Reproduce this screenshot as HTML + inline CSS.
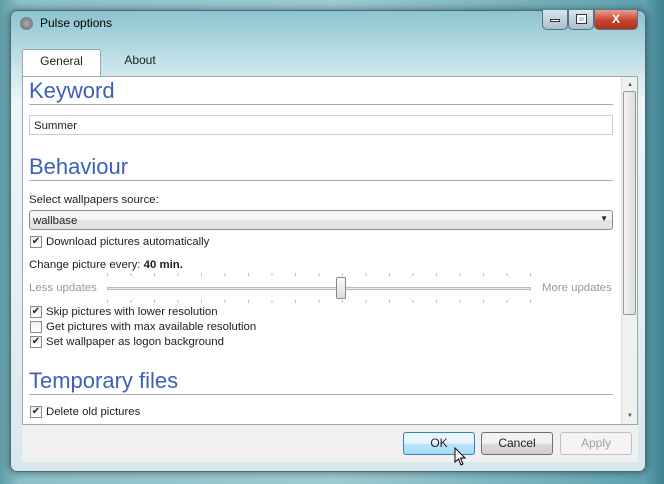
<!DOCTYPE html>
<html><head><style>
*{box-sizing:border-box;margin:0;padding:0}
body{width:664px;height:484px;overflow:hidden;position:relative;font-family:"Liberation Sans",sans-serif;font-size:11.4px;color:#1e1e1e;
background:linear-gradient(90deg,#5d9ea8 0%,#8cc0c8 3%,#9fcbd2 50%,#5fa2b0 97%,#3e8090 100%)}
.win{position:absolute;left:10px;top:10px;width:636px;height:462px;border:1px solid #4a6a78;border-radius:7px;
background:linear-gradient(180deg,#8cc3d0 0%,#c8e4ea 12%,#eef6f8 20%,#d6e8ee 100%);box-shadow:0 0 8px rgba(0,0,0,.5)}
.title{position:absolute;left:40px;top:16px;font-size:12px;color:#000}
.ico{position:absolute;left:20px;top:17px;width:13px;height:13px;border-radius:50%;background:radial-gradient(#aaa,#666)}
.ctl{position:absolute;top:10px;height:20px;border:1px solid #5a6f80;border-top:none;border-radius:0 0 5px 5px}
.panel{position:absolute;left:22px;top:76px;width:616px;height:349px;background:#fff;border:1px solid #9aa8b0}
.tab{position:absolute;top:49px;height:28px;font-size:12px;text-align:center;line-height:20px}
.h{position:absolute;left:6px;font-size:22px;color:#3c5fb8;font-weight:normal}
.rule{position:absolute;left:6px;width:584px;height:1px;background:#aaa}
.t{position:absolute;left:6px;white-space:nowrap}
.cb{position:absolute;left:7px;width:12px;height:12px;border:1px solid #8a8a8a;background:linear-gradient(#eee,#fff);font-size:10px;line-height:10px;color:#223;text-align:center}
.btn{position:absolute;top:432px;height:23px;width:72px;border:1px solid #707070;border-radius:3px;text-align:center;line-height:21px;font-size:12px;background:linear-gradient(#f2f2f2 50%,#dcdcdc 50%,#cfcfcf)}
</style></head><body>
<div class="win"></div>
<div class="ico"></div><div class="title">Pulse options</div>
<div class="ctl" style="left:542px;width:26px;background:linear-gradient(#d8e6ee,#a8c0cc)"><div style="margin:9px auto 0;width:10px;height:3px;background:#fff;border:1px solid #333"></div></div>
<div class="ctl" style="left:568px;width:26px;background:linear-gradient(#d8e6ee,#a8c0cc)"><div style="margin:5px auto 0;width:9px;height:8px;border:2px solid #fff;outline:1px solid #333"></div></div>
<div class="ctl" style="left:594px;width:44px;background:linear-gradient(#e8a090,#c8442c 55%,#b03018);color:#fff;text-align:center;font-weight:bold;font-size:12px;line-height:18px">X</div>
<div class="tab" style="left:22px;width:79px;background:#fff;border:1px solid #9aa8b0;border-bottom:none;border-radius:2px 2px 0 0;line-height:22px">General</div>
<div class="tab" style="left:106px;width:68px;line-height:22px">About</div>
<div style="position:absolute;top:424px;height:38px;background:#f0f0f0;border-top:1px solid #ccc;left:22px;width:616px"></div>
<div class="panel">
 <div class="h" style="top:1px">Keyword</div>
 <div class="rule" style="top:27px"></div>
 <div style="position:absolute;left:6px;top:38px;width:584px;height:20px;border:1px solid #ccc"><span style="position:absolute;left:4px;top:4px">Summer</span></div>
 <div class="h" style="top:77px">Behaviour</div>
 <div class="rule" style="top:103px"></div>
 <div class="t" style="top:117px">Select wallpapers source:</div>
 <div style="position:absolute;left:6px;top:133px;width:584px;height:20px;border:1px solid #8a8a8a;border-radius:3px;background:linear-gradient(#f4f4f4 50%,#e4e4e4 50%)"><span style="position:absolute;left:3px;top:4px">wallbase</span><span style="position:absolute;right:4px;top:3px;font-size:8px">▼</span></div>
 <div class="cb" style="top:159px">✔</div><div class="t" style="left:23px;top:159px">Download pictures automatically</div>
 <div class="t" style="top:182px">Change picture every: <b>40 min.</b></div>
 <div class="t" style="top:205px;color:#999">Less updates</div>
 <div class="t" style="left:519px;top:205px;color:#999">More updates</div>
 <div style="position:absolute;left:84px;top:210px;width:424px;height:3px;border:1px solid #bbb;background:#e8e8e8"></div>
 <div style="position:absolute;left:84px;top:196px;width:424px;height:30px;background:repeating-linear-gradient(90deg,#bbb 0 1px,transparent 1px 23.5px);-webkit-mask:linear-gradient(#000 0 3px,transparent 3px 27px,#000 27px)"></div>
 <div style="position:absolute;left:313px;top:200px;width:10px;height:22px;border:1px solid #888;border-radius:2px;background:linear-gradient(#fafafa,#ddd)"></div>
 <div class="cb" style="top:229px">✔</div><div class="t" style="left:23px;top:229px">Skip pictures with lower resolution</div>
 <div class="cb" style="top:244px"></div><div class="t" style="left:23px;top:244px">Get pictures with max available resolution</div>
 <div class="cb" style="top:259px">✔</div><div class="t" style="left:23px;top:259px">Set wallpaper as logon background</div>
 <div class="h" style="top:291px">Temporary files</div>
 <div class="rule" style="top:317px"></div>
 <div class="cb" style="top:329px">✔</div><div class="t" style="left:23px;top:329px">Delete old pictures</div>
 <div style="position:absolute;right:0;top:0;width:16px;height:347px;background:#f0f0f0;border-left:1px solid #e0e0e0">
  <div style="position:absolute;left:5px;top:5px;font-size:6px;color:#555">▲</div>
  <div style="position:absolute;left:1px;top:14px;width:13px;height:224px;border:1px solid #999;border-radius:2px;background:linear-gradient(90deg,#f4f4f4,#dcdcdc)"></div>
  <div style="position:absolute;left:5px;bottom:5px;font-size:6px;color:#555">▼</div>
 </div>
</div>
<div class="btn" style="left:403px;border-color:#3c7fb1;background:linear-gradient(#eaf6fd 50%,#bee6fd 50%,#a7d9f5)">OK</div>
<div class="btn" style="left:481px">Cancel</div>
<div class="btn" style="left:560px;color:#a0a0a0;border-color:#c0c0c0;background:#f4f4f4">Apply</div>
<svg style="position:absolute;left:454px;top:447px" width="13" height="20"><path d="M1 1 L1 15 L4.5 12 L7 18 L9 17 L6.5 11 L11 11 Z" fill="#fff" stroke="#000" stroke-width="1"/></svg>
</body></html>
